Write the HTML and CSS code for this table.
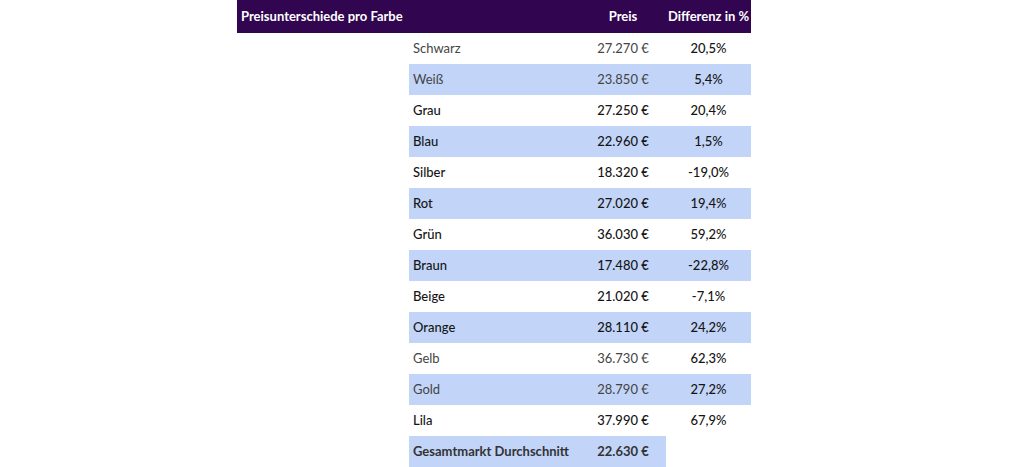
FILE: index.html
```html
<!DOCTYPE html>
<html lang="de">
<head>
<meta charset="utf-8">
<title>Preisunterschiede pro Farbe</title>
<link rel="stylesheet" href="styles.css">
</head>
<body>
<div class="table">
  <div class="head">
    <div class="h-title">Preisunterschiede pro Farbe</div>
    <div class="h-price">Preis</div>
    <div class="h-diff">Differenz in %</div>
  </div>
  <div class="row muted"><div class="band"><span class="c-name">Schwarz</span><span class="c-price">27.270 €</span><span class="c-diff">20,5%</span></div></div>
  <div class="row muted alt"><div class="band"><span class="c-name">Weiß</span><span class="c-price">23.850 €</span><span class="c-diff">5,4%</span></div></div>
  <div class="row"><div class="band"><span class="c-name">Grau</span><span class="c-price">27.250 €</span><span class="c-diff">20,4%</span></div></div>
  <div class="row alt"><div class="band"><span class="c-name">Blau</span><span class="c-price">22.960 €</span><span class="c-diff">1,5%</span></div></div>
  <div class="row"><div class="band"><span class="c-name">Silber</span><span class="c-price">18.320 €</span><span class="c-diff">-19,0%</span></div></div>
  <div class="row alt"><div class="band"><span class="c-name">Rot</span><span class="c-price">27.020 €</span><span class="c-diff">19,4%</span></div></div>
  <div class="row"><div class="band"><span class="c-name">Grün</span><span class="c-price">36.030 €</span><span class="c-diff">59,2%</span></div></div>
  <div class="row alt"><div class="band"><span class="c-name">Braun</span><span class="c-price">17.480 €</span><span class="c-diff">-22,8%</span></div></div>
  <div class="row"><div class="band"><span class="c-name">Beige</span><span class="c-price">21.020 €</span><span class="c-diff">-7,1%</span></div></div>
  <div class="row alt"><div class="band"><span class="c-name">Orange</span><span class="c-price">28.110 €</span><span class="c-diff">24,2%</span></div></div>
  <div class="row muted"><div class="band"><span class="c-name">Gelb</span><span class="c-price">36.730 €</span><span class="c-diff">62,3%</span></div></div>
  <div class="row muted alt"><div class="band"><span class="c-name">Gold</span><span class="c-price">28.790 €</span><span class="c-diff">27,2%</span></div></div>
  <div class="row"><div class="band"><span class="c-name">Lila</span><span class="c-price">37.990 €</span><span class="c-diff">67,9%</span></div></div>
  <div class="row total alt"><div class="band"><span class="c-name">Gesamtmarkt Durchschnitt</span><span class="c-price">22.630 €</span></div></div>
</div>
</body>
</html>
```
FILE: styles.css
```css
html, body {
  margin: 0;
  padding: 0;
  background: #ffffff;
}

body {
  font-family: "Lato", "Inter", "Liberation Sans", sans-serif;
  font-size: 13px;
  color: #151515;
}

.table {
  width: 514px;
  margin-left: 237px;
  display: flex;
  flex-direction: column;
}

.head {
  height: 33px;
  background: #31054f;
  color: #ffffff;
  font-weight: 700;
  display: grid;
  grid-template-columns: 343px 86px 85px;
  align-items: center;
  padding-bottom: 1px;
  box-sizing: border-box;
}

.h-title {
  padding-left: 4px;
}

.h-price,
.h-diff {
  text-align: center;
}

.row {
  height: 31px;
  padding-left: 172px;
  display: flex;
}

.band {
  width: 342px;
  display: grid;
  grid-template-columns: 171px 86px 85px;
  align-items: center;
  font-weight: 500;
  padding-bottom: 2px;
  box-sizing: border-box;
}

.alt .band {
  background: #c2d5f9;
}

.c-name {
  padding-left: 4px;
}

.c-price,
.c-diff {
  text-align: center;
}

.muted .c-name,
.muted .c-price {
  color: #444444;
  font-weight: 400;
}

.muted .c-diff {
  color: #151515;
}

.total .band {
  width: 257px;
  grid-template-columns: 171px 86px;
  font-weight: 700;
  color: #333333;
}
```
